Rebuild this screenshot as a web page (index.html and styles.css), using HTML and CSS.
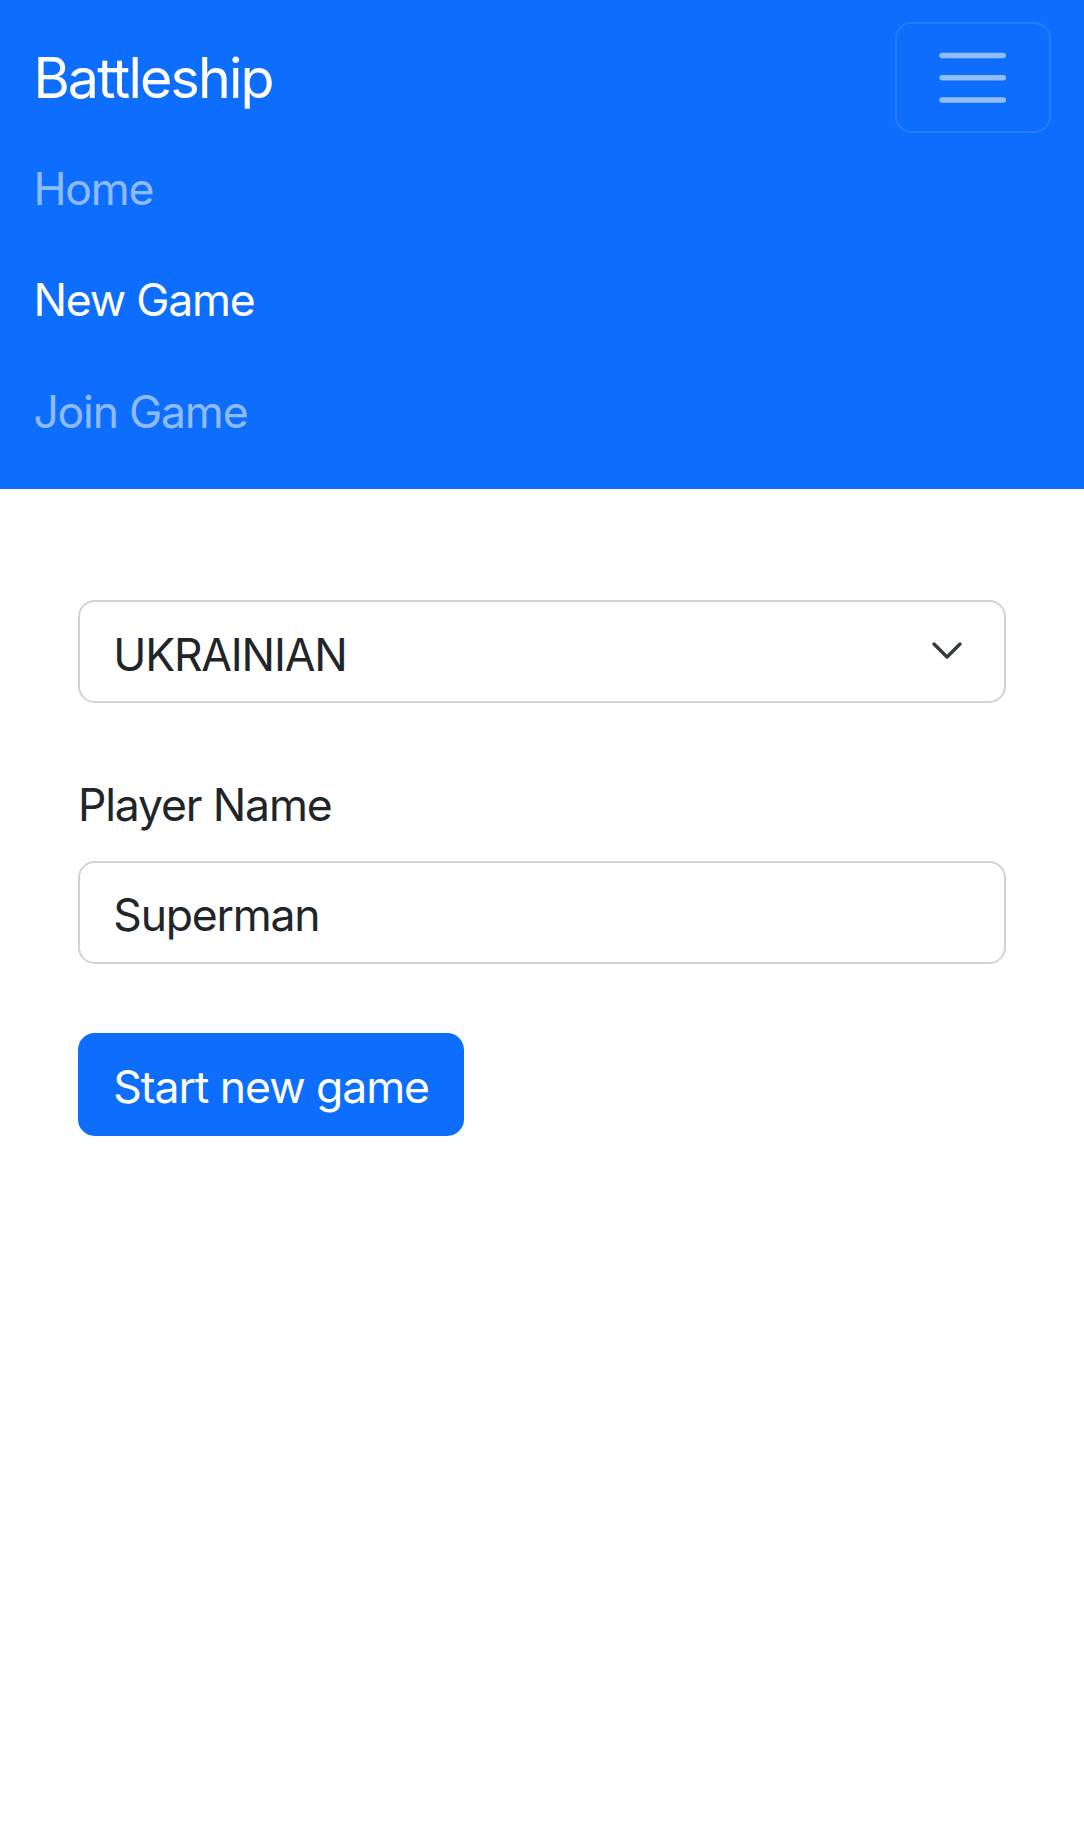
FILE: index.html
```html
<!DOCTYPE html>
<html lang="en">
<head>
<meta charset="utf-8">
<title>Battleship</title>
<link rel="stylesheet" href="styles.css">
</head>
<body>
<nav class="navbar">
  <div class="nav-container">
    <a class="brand" href="#">Battleship</a>
    <button class="toggler" type="button" aria-label="Toggle navigation">
      <svg class="toggler-icon" viewBox="0 0 30 30" xmlns="http://www.w3.org/2000/svg">
        <path d="M4 7h22M4 15h22M4 23h22" stroke="rgba(255,255,255,0.55)" stroke-width="2" stroke-linecap="round" stroke-miterlimit="10"/>
      </svg>
    </button>
    <ul class="nav-menu">
      <li><a class="nav-link" href="#">Home</a></li>
      <li><a class="nav-link active" href="#">New Game</a></li>
      <li><a class="nav-link" href="#">Join Game</a></li>
    </ul>
  </div>
</nav>
<main class="page">
  <form class="game-form">
    <div class="select-wrap">
      <select class="form-select">
        <option>UKRAINIAN</option>
      </select>
      <svg class="chevron" viewBox="0 0 32 20" xmlns="http://www.w3.org/2000/svg">
        <path d="M3 3 L16 16 L29 3" fill="none" stroke="#343a40" stroke-width="3.4" stroke-linecap="round" stroke-linejoin="round"/>
      </svg>
    </div>
    <label class="form-label" for="player">Player Name</label>
    <input class="form-control" id="player" type="text" value="Superman">
    <button class="btn-primary" type="button">Start new game</button>
  </form>
</main>
</body>
</html>
```
FILE: styles.css
```css
* { box-sizing: border-box; }
html, body { margin: 0; padding: 0; }
body {
  font-family: Inter, "Noto Sans", "Liberation Sans", sans-serif;
  color: #212529;
  background: #fff;
}
.navbar {
  background: #0d6efd;
  padding: 22.2px 0;
}
.nav-container {
  display: flex;
  flex-wrap: wrap;
  align-items: center;
  justify-content: space-between;
  padding: 0 33.4px;
}
.brand {
  color: #fff;
  text-decoration: none;
  font-size: 55.6px;
  line-height: 83.4px;
  padding: 13.9px 0;
  letter-spacing: -1.9px;
}
.toggler {
  width: 155.6px;
  height: 111.2px;
  padding: 0;
  background: transparent;
  border: 2.78px solid rgba(255,255,255,0.1);
  border-radius: 16.7px;
  display: flex;
  align-items: center;
  justify-content: center;
}
.toggler-icon { width: 83.4px; height: 83.4px; display: block; }
.nav-menu {
  flex-basis: 100%;
  list-style: none;
  margin: 0;
  padding: 0;
  display: flex;
  flex-direction: column;
}
.nav-link {
  display: block;
  padding: 23px 0 21.4px;
  font-size: 44.5px;
  line-height: 66.7px;
  color: rgba(255,255,255,0.55);
  text-decoration: none;
  letter-spacing: -1.2px;
}
.nav-link.active { color: #fff; }
.page {
  padding: 111.2px 77.9px 0;
}
.game-form {
  display: flex;
  flex-direction: column;
  align-items: flex-start;
}
.select-wrap {
  position: relative;
  width: 100%;
  margin-bottom: 69px;
}
.form-select, .form-control {
  display: block;
  width: 100%;
  height: 103px;
  padding: 6px 33.4px 0;
  font-family: inherit;
  font-size: 44.5px;
  color: #212529;
  background: #fff;
  border: 2.78px solid #ced4da;
  border-radius: 16.7px;
  -webkit-appearance: none;
  appearance: none;
  letter-spacing: -1.2px;
  outline: none;
}
.chevron {
  position: absolute;
  right: 43px;
  top: 41px;
  width: 32px;
  height: 20px;
  pointer-events: none;
}
.form-label {
  font-size: 44.5px;
  line-height: 66.7px;
  margin-bottom: 22.2px;
  letter-spacing: -1.15px;
}
.form-control { margin-bottom: 69px; }
.btn-primary {
  height: 103px;
  padding: 6px 33.4px 0;
  font-family: inherit;
  font-size: 44.5px;
  color: #fff;
  background: #0d6efd;
  border: 2.78px solid #0d6efd;
  border-radius: 16.7px;
  letter-spacing: -1.05px;
}
```
